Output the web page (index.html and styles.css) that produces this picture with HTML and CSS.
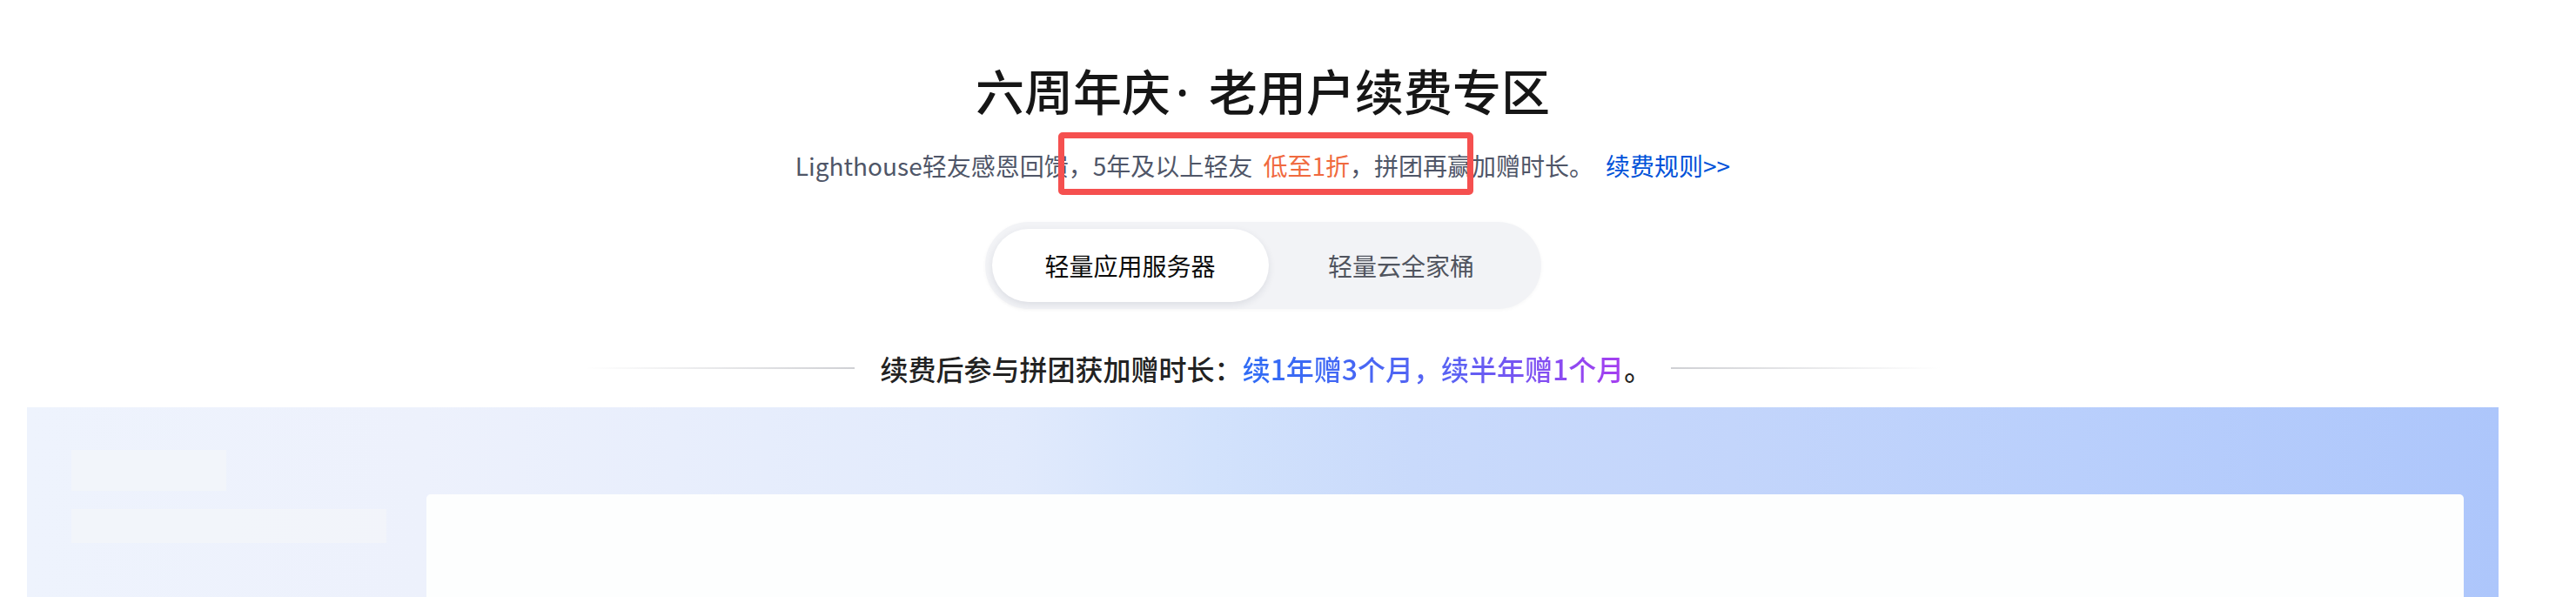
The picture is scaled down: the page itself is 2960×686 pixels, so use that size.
FILE: index.html
```html
<!DOCTYPE html>
<html lang="zh-CN">
<head>
<meta charset="utf-8">
<title>六周年庆· 老用户续费专区</title>
<link rel="stylesheet" href="styles.css">
</head>
<body>
<div class="page">
  <h1 class="title">六周年庆<span class="dot">·</span> 老用户续费专区</h1>
  <div class="intro">
    <p class="sub">Lighthouse轻友感恩回馈，5年及以上轻友 <span class="hl">低至1折</span>，拼团再赢加赠时长。<a class="rule" href="#">续费规则&gt;&gt;</a></p>
    <div class="mark"></div>
  </div>
  <div class="tabs-row">
    <div class="tabs">
      <div class="tab tab-first active">轻量应用服务器</div>
      <div class="tab tab-second">轻量云全家桶</div>
    </div>
  </div>
  <div class="divider">
    <span class="line line-left"></span>
    <p class="tip">续费后参与拼团获加赠时长：<span class="grad">续1年赠3个月，续半年赠1个月</span>。</p>
    <span class="line line-right"></span>
  </div>
  <div class="panel">
    <div class="side">
      <div class="sk sk1"></div>
      <div class="sk sk2"></div>
    </div>
    <div class="main"></div>
  </div>
</div>
</body>
</html>
```
FILE: styles.css
```css
html, body {
  margin: 0;
  padding: 0;
  height: 686px;
  overflow: hidden;
  background: #ffffff;
}
body {
  font-family: "Noto Sans CJK SC", "Noto Sans", sans-serif;
  color: #181818;
}
.page {
  width: 2902px;
  height: 686px;
  display: flex;
  flex-direction: column;
  align-items: center;
}
.title {
  margin: 64px 0 0;
  font-size: 56px;
  line-height: 78px;
  font-weight: 500;
  color: #161616;
  letter-spacing: 0;
}
.dot {
  font-family: "Noto Sans", "DejaVu Sans", sans-serif;
  margin: 0 10px 0 6px;
}
.intro {
  position: relative;
  width: 100%;
  margin-top: 26px;
  display: flex;
  justify-content: center;
}
.sub {
  margin: 0;
  font-size: 28px;
  line-height: 40px;
  color: #4f5668;
  white-space: nowrap;
}
.hl {
  color: #f06a3f;
  margin-left: 6px;
}
.rule {
  color: #0052d9;
  text-decoration: none;
  margin-left: 14px;
}
.mark {
  position: absolute;
  left: 1216px;
  top: -18px;
  width: 477px;
  height: 72px;
  box-sizing: border-box;
  border: 7px solid #f5504f;
  border-radius: 5px;
}
.tabs-row {
  margin-top: 45px;
  display: flex;
  justify-content: center;
}
.tabs {
  display: flex;
  padding: 8px;
  background: #f2f3f6;
  border-radius: 50px;
  box-shadow: 0 1px 4px rgba(0, 0, 0, 0.04);
}
.tab {
  height: 84px;
  display: flex;
  align-items: center;
  justify-content: center;
  font-size: 28px;
  color: #50545e;
  border-radius: 42px;
}
.tab-first { width: 318px; }
.tab-second { width: 305px; }
.tab.active {
  background: #ffffff;
  color: #0b0b0b;
  box-shadow: 0 3px 8px rgba(30, 40, 70, 0.10);
}
.divider {
  margin-top: 46px;
  display: flex;
  align-items: center;
}
.line {
  width: 310px;
  height: 2px;
}
.line-left {
  background: linear-gradient(90deg, rgba(210, 210, 214, 0), #cfd0d4);
  margin-right: 30px;
}
.line-right {
  background: linear-gradient(90deg, #cfd0d4, rgba(210, 210, 214, 0));
  margin-left: 22px;
}
.tip {
  margin: 0;
  font-size: 32px;
  line-height: 44px;
  font-weight: 500;
  color: #222222;
  white-space: nowrap;
}
.grad {
  background: linear-gradient(90deg, #2f6cf5 0%, #5a62f3 55%, #a63ef0 100%);
  -webkit-background-clip: text;
  background-clip: text;
  color: transparent;
}
.panel {
  align-self: stretch;
  margin: 23px 31px 0;
  flex: 1;
  min-height: 0;
  display: flex;
  background: linear-gradient(90deg, #eef3fd 0%, #edf1fc 16%, #e1eafc 40%, #d2e2fc 48%, #c9dafb 56%, #c3d5fb 69%, #b9cffc 83%, #adc6fb 100%);
}
.side {
  width: 459px;
  padding: 49px 0 0 51px;
  box-sizing: border-box;
  display: flex;
  flex-direction: column;
}
.sk {
  background: rgba(245, 246, 249, 0.6);
}
.sk1 {
  width: 178px;
  height: 47px;
}
.sk2 {
  width: 362px;
  height: 39px;
  margin-top: 21px;
}
.main {
  flex: 1;
  margin: 100px 40px 0 0;
  background: #fdfefe;
  border-radius: 5px 5px 0 0;
}
```
